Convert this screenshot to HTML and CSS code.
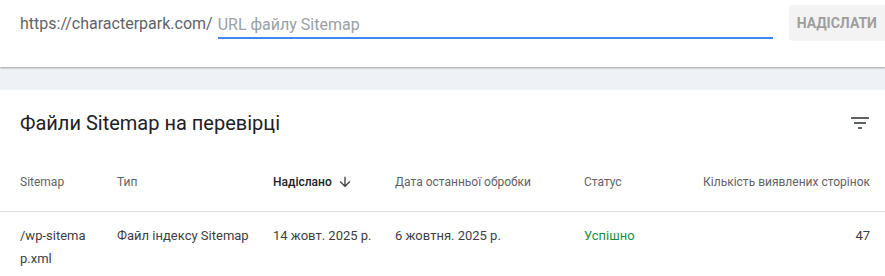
FILE: index.html
```html
<!DOCTYPE html>
<html lang="uk">
<head>
    <meta charset="UTF-8">
    <meta name="viewport" content="width=device-width, initial-scale=1.0">
    <title>Файли Sitemap</title>
    <link rel="stylesheet" href="styles.css">
</head>
<body>
    <!-- Add sitemap bar -->
    <section class="add-bar">
        <span class="site-prefix">https://characterpark.com/</span>
        <input class="sitemap-input" type="text" placeholder="URL файлу Sitemap">
        <button class="submit-btn" type="button">Надіслати</button>
    </section>

    <div class="band"></div>

    <!-- Submitted sitemaps table -->
    <section class="card">
        <div class="card-head">
            <h2>Файли Sitemap на перевірці</h2>
            <svg class="filter-icon" width="24" height="24" viewBox="0 0 24 24">
                <path d="M10 18h4v-2h-4v2zM3 6v2h18V6H3zm3 7h12v-2H6v2z" fill="#5f6368"/>
            </svg>
        </div>

        <div class="row head-row">
            <div>Sitemap</div>
            <div>Тип</div>
            <div class="sorted">Надіслано
                <svg class="sort-icon" width="16" height="16" viewBox="0 0 24 24">
                    <path d="M20 12l-1.41-1.41L13 16.17V4h-2v12.17l-5.58-5.59L4 12l8 8 8-8z" fill="#3c4043"/>
                </svg>
            </div>
            <div>Дата останньої обробки</div>
            <div>Статус</div>
            <div class="num">Кількість виявлених сторінок</div>
        </div>

        <div class="row body-row">
            <div class="path">/wp-sitemap.xml</div>
            <div>Файл індексу Sitemap</div>
            <div>14 жовт. 2025 р.</div>
            <div>6 жовтня. 2025 р.</div>
            <div class="ok">Успішно</div>
            <div class="num">47</div>
        </div>
    </section>
</body>
</html>
```

FILE: styles.css
```css
body {
    font-family: Roboto, 'Noto Sans', sans-serif;
    margin: 0;
    padding: 0;
    background-color: #eef1f5;
    color: #3c4043;
}

/* Add bar */
.add-bar {
    display: flex;
    align-items: flex-start;
    height: 62px;
    padding: 5px 0 0 20px;
    background-color: #fff;
    box-shadow: 0 1px 2px rgba(60, 64, 67, 0.45);
    overflow: hidden;
}

.site-prefix {
    flex: 0 0 auto;
    margin-top: 7px;
    font-size: 16px;
    line-height: 24px;
    color: #5f6368;
    white-space: nowrap;
}

.sitemap-input {
    flex: 0 0 555px;
    margin: 7px 0 0 5px;
    height: 25px;
    padding: 0;
    border: none;
    border-bottom: 2px solid #4285f4;
    font-family: inherit;
    font-size: 16px;
    color: #202124;
    outline: none;
    background: transparent;
}

.sitemap-input::placeholder {
    color: #9aa0a6;
}

.submit-btn {
    margin-left: 16px;
    flex: 0 0 auto;
    height: 36px;
    padding: 0 16px 0 8px;
    border: none;
    border-radius: 4px;
    background-color: #f3f3f3;
    font-family: inherit;
    font-size: 14px;
    font-weight: 700;
    text-transform: uppercase;
    color: #9e9e9e;
}

.band {
    height: 23px;
}

/* Card */
.card {
    background-color: #fff;
    height: 186px;
    overflow: hidden;
}

.card-head {
    display: flex;
    justify-content: space-between;
    align-items: center;
    padding: 19px 13px 0 20px;
}

.card-head h2 {
    margin: 0;
    font-size: 20px;
    font-weight: 400;
    line-height: 28px;
    color: #202124;
}

.filter-icon {
    display: block;
}

/* Table rows */
.row {
    display: grid;
    grid-template-columns: 97px 156px 122px 189px 1fr auto;
    padding: 0 15px 0 20px;
}

.row > div {
    padding-right: 20px;
}

.row > .num {
    padding-right: 0;
    text-align: right;
}

.head-row {
    padding-top: 37px;
    padding-bottom: 21px;
    border-bottom: 1px solid #e0e0e0;
    font-size: 12px;
    line-height: 16px;
    color: #5f6368;
}

.head-row .sorted {
    display: flex;
    align-items: center;
    font-weight: 500;
    color: #202124;
}

.sort-icon {
    margin-left: 5px;
}

.body-row {
    padding-top: 12px;
    font-size: 13px;
    line-height: 23px;
    color: #3c4043;
}

.body-row .path {
    padding-right: 26px;
    word-break: break-all;
}

.ok {
    color: #1e8e3e;
}
```
